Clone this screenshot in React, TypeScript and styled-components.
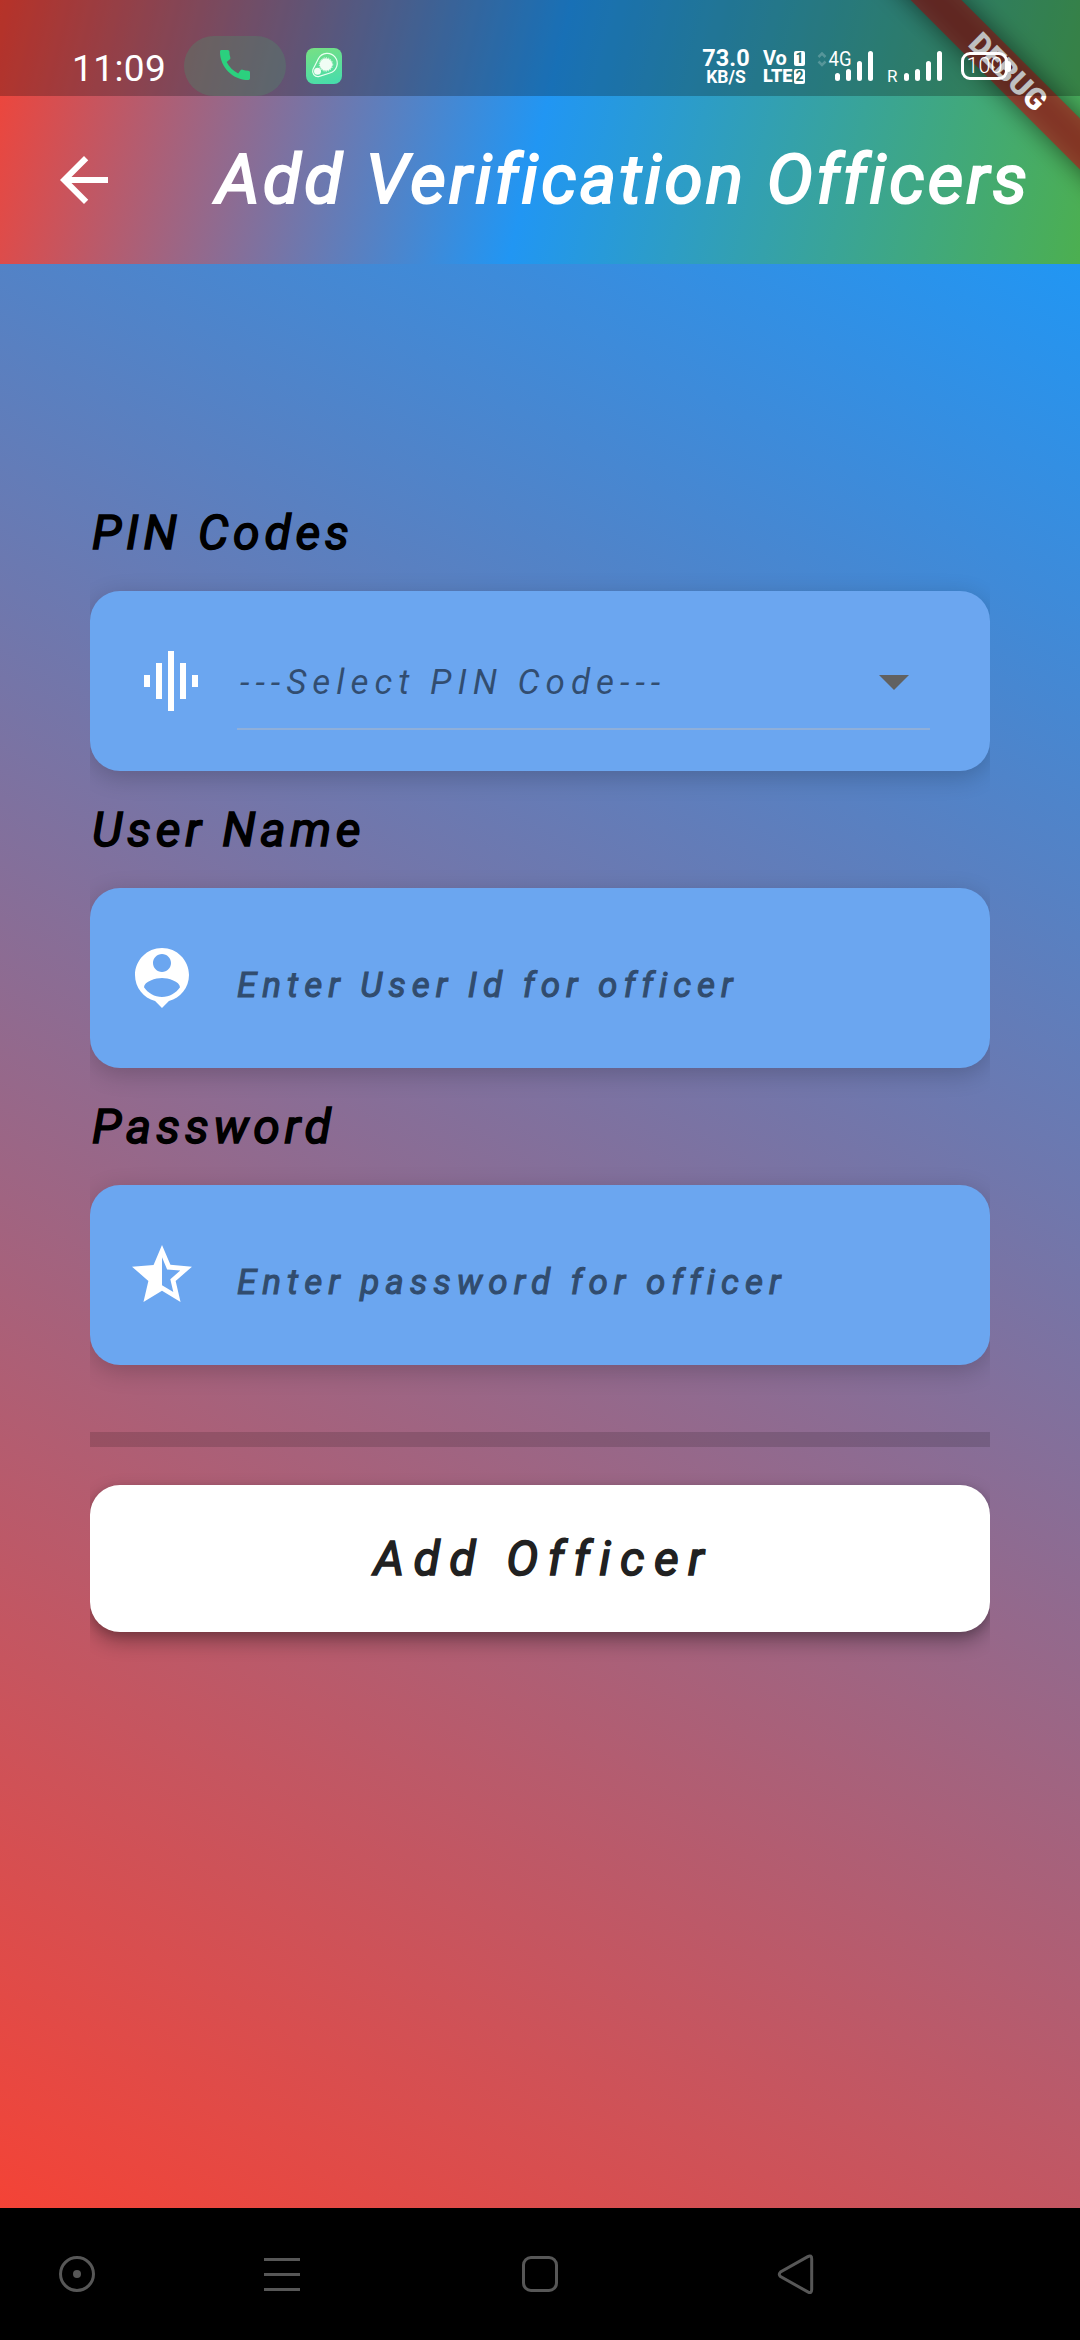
import React from "react";
import styled, { createGlobalStyle } from "styled-components";

const GlobalStyle = createGlobalStyle`
  *, *::before, *::after { box-sizing: border-box; }
  body { margin: 0; background: #000; font-family: Roboto, "Liberation Sans", sans-serif; }
`;

const Screen = styled.div`
  display: flex;
  flex-direction: column;
  width: 1080px;
  height: 2340px;
  overflow: hidden;
  font-variant-ligatures: none;
`;

/* ---------- app bar ---------- */

const AppBar = styled.header`
  position: relative;
  z-index: 1;
  flex: none;
  height: 264px;
  background: linear-gradient(103.74deg, #f44336 0%, #2196f3 50%, #4caf50 100%);
`;

const StatusBar = styled.div`
  position: relative;
  z-index: 2;
  display: flex;
  align-items: flex-start;
  height: 96px;
  padding-left: 72px;
  background: rgba(0, 0, 0, 0.25);
  color: #fff;
`;

const Clock = styled.div`
  width: 112px;
  padding-top: 48px;
  font-size: 37px;
  line-height: 42px;
  letter-spacing: 0.4px;
  white-space: nowrap;
`;

const CallPill = styled.div`
  display: flex;
  justify-content: center;
  width: 102px;
  height: 60px;
  margin-top: 36px;
  padding-top: 9px;
  border-radius: 30px;
  background: rgba(84, 128, 104, 0.42);
`;

const AppBadge = styled.div`
  width: 36px;
  height: 36px;
  margin: 48px 0 0 20px;
  border-radius: 8px;
  background: linear-gradient(165deg, #78e083, #44dcae);
`;

const StatusRight = styled.div`
  display: flex;
  align-items: flex-start;
  flex: 1;
  padding: 48px 0 0 359px;
`;

const NetSpeed = styled.div`
  display: flex;
  flex-direction: column;
  align-items: center;
  width: 50px;
  white-space: nowrap;
`;

const SpeedValue = styled.span`
  font-size: 23.5px;
  font-weight: 700;
  line-height: 20px;
`;

const SpeedUnit = styled.span`
  font-size: 17.5px;
  font-weight: 700;
  line-height: 18px;
`;

const Volte = styled.div`
  display: grid;
  grid-template-columns: 31px 11px;
  grid-template-rows: 18px 18px;
  align-items: center;
  width: 42px;
  margin: 1px 0 0 12px;
`;

const VolteText = styled.span<{ $size: number; $weight: number }>`
  font-size: ${(p) => p.$size}px;
  font-weight: ${(p) => p.$weight};
  line-height: 18px;
`;

const SimBox = styled.span`
  display: flex;
  align-items: center;
  justify-content: center;
  width: 11px;
  height: 15px;
  border-radius: 2px;
  background: #fff;
  color: #27706e;
  font-size: 14px;
  font-weight: 700;
  line-height: 15px;
`;

const Signal = styled.svg<{ $gap: number }>`
  flex: none;
  margin-left: ${(p) => p.$gap}px;
  overflow: visible;
`;

const Battery = styled.div`
  display: flex;
  align-items: center;
  margin: 4px 0 0 18px;
`;

const BatteryBody = styled.div`
  display: flex;
  align-items: center;
  justify-content: center;
  width: 47px;
  height: 28px;
  border: 3px solid #fff;
  border-radius: 9px;
  font-size: 21.5px;
  font-weight: 300;
  line-height: 22px;
`;

const BatteryTip = styled.div`
  width: 3px;
  height: 11px;
  border-radius: 0 3px 3px 0;
  background: #fff;
`;

const Toolbar = styled.div`
  display: flex;
  align-items: center;
  height: 168px;
  padding-left: 48px;
`;

const Title = styled.h1`
  margin: 0 0 0 96px;
  color: #fff;
  font-size: 69px;
  font-style: italic;
  font-weight: 400;
  letter-spacing: 3.4px;
  line-height: 84px;
  white-space: nowrap;
  -webkit-text-stroke: 2.2px #fff;
`;

const BannerClip = styled.div`
  position: absolute;
  top: 0;
  right: 0;
  z-index: 1;
  width: 264px;
  height: 264px;
  overflow: hidden;
`;

const Ribbon = styled.div`
  position: absolute;
  top: 54px;
  left: 32px;
  width: 320px;
  height: 36px;
  transform: rotate(45deg);
  color: #fff;
  font-size: 30px;
  font-weight: 900;
  line-height: 35px;
  text-align: center;

  &::before,
  &::after {
    content: "";
    position: absolute;
    inset: 0;
  }
  &::before {
    z-index: -2;
    background: rgba(0, 0, 0, 0.5);
    filter: blur(12px);
  }
  &::after {
    z-index: -1;
    background: rgba(183, 28, 28, 0.63);
  }
`;

/* ---------- form ---------- */

const Body = styled.main`
  flex: 1;
  padding: 238px 90px 0;
  background: linear-gradient(209.05deg, #2196f3, #f44336);
`;

const Form = styled.form`
  display: flex;
  flex-direction: column;
  overflow-x: clip;
`;

const Label = styled.label`
  height: 60px;
  margin-bottom: 29px;
  padding: 1px 0 0 2px;
  color: #000;
  font-size: 48px;
  font-style: italic;
  letter-spacing: 4.75px;
  line-height: 60px;
  -webkit-text-stroke: 1.6px #000;
`;

const Card = styled.div<{ $inset: number }>`
  display: flex;
  align-items: center;
  height: 180px;
  margin-bottom: 28px;
  padding: 0 60px 0 ${(p) => p.$inset}px;
  border-radius: 30px;
  background: #6ba6f0;
  box-shadow: 0 6px 24px rgba(0, 0, 0, 0.2);
`;

const Hint = styled.div`
  margin-left: 39px;
  padding-top: 16px;
  color: #314c6e;
  font-size: 35px;
  font-style: italic;
  letter-spacing: 6px;
  line-height: 42px;
  white-space: nowrap;
  -webkit-text-stroke: 1.1px #314c6e;
`;

const Select = styled.div`
  display: flex;
  align-items: center;
  justify-content: space-between;
  flex: 1;
  height: 98px;
  margin-left: 30px;
  border-bottom: 2px solid #8fafd9;
  padding-top: 2px;
`;

const SelectValue = styled.span`
  padding: 4px 0 0 3px;
  color: rgba(0, 0, 0, 0.54);
  font-size: 35px;
  font-style: italic;
  letter-spacing: 6px;
  line-height: 42px;
  white-space: nowrap;
`;

const Divider = styled.div`
  height: 15px;
  margin: 39px 0 38px;
  background: rgba(0, 0, 0, 0.14);
`;

const SubmitButton = styled.button`
  height: 147px;
  margin: 0 0 60px;
  padding: 0 0 0 7px;
  border: 0;
  border-radius: 30px;
  background: #fff;
  box-shadow: 0 9px 20px rgba(0, 0, 0, 0.33), 0 3px 9px rgba(0, 0, 0, 0.12);
  color: #212121;
  font-family: inherit;
  font-size: 48px;
  font-style: italic;
  letter-spacing: 9.5px;
  line-height: 60px;
  -webkit-text-stroke: 1.6px #212121;
`;

/* ---------- navigation bar ---------- */

const NavBar = styled.nav`
  display: flex;
  align-items: center;
  flex: none;
  height: 132px;
  padding-left: 57px;
  background: #000;
`;

const NavIcon = styled.svg<{ $gap?: number }>`
  width: 40px;
  height: 44px;
  margin-left: ${(p) => p.$gap ?? 0}px;
  fill: none;
  stroke: #575757;
  stroke-width: 3;
`;

const IconSvg = styled.svg`
  flex: none;
`;

const MaterialIcon = ({ d, color = "#fff", size = 72 }: { d: string; color?: string; size?: number }) => (
  <IconSvg width={size} height={size} viewBox="0 0 24 24" fill={color}>
    <path d={d} />
  </IconSvg>
);

const icons = {
  back: "M20 11H7.83l5.59-5.59L12 4l-8 8 8 8 1.41-1.41L7.83 13H20v-2z",
  call: "M20.01 15.38c-1.23 0-2.42-.2-3.53-.56-.35-.12-.74-.03-1.01.24l-1.57 1.97c-2.83-1.35-5.48-3.9-6.89-6.83l1.95-1.66c.27-.28.35-.67.24-1.02-.37-1.11-.56-2.3-.56-3.53 0-.54-.45-.99-.99-.99H4.19C3.65 3 3 3.24 3 3.99 3 13.28 10.73 21 20.01 21c.71 0 .99-.63.99-1.18v-3.45c0-.54-.45-.99-.99-.99z",
  equalizer: "M7 18h2V6H7v12zm4 4h2V2h-2v20zm-8-8h2v-4H3v4zm12 4h2V6h-2v12zm4-8v4h2v-4h-2z",
  person:
    "M12 2c-4.97 0-9 4.03-9 9 0 4.17 2.84 7.67 6.69 8.69L12 22l2.31-2.31C18.16 18.67 21 15.17 21 11c0-4.97-4.03-9-9-9zm0 2c1.66 0 3 1.34 3 3s-1.34 3-3 3-3-1.34-3-3 1.34-3 3-3zm0 14.3c-2.5 0-4.71-1.28-6-3.22.03-1.99 4-3.08 6-3.08 1.99 0 5.97 1.09 6 3.08-1.29 1.94-3.5 3.22-6 3.22z",
  star: "M22 9.24l-7.19-.62L12 2 9.19 8.63 2 9.24l5.46 4.73L5.82 21 12 17.27 18.18 21l-1.63-7.03L22 9.24zM12 15.4V6.1l1.71 4.04 4.38.38-3.32 2.88 1 4.28L12 15.4z",
  dropdown: "M7 10l5 5 5-5z",
};

const Bars = ({ x }: { x: number }) => (
  <g stroke="#fff" strokeWidth="5" strokeLinecap="round">
    <path d={`M${x} 27.5v3M${x + 11} 23.5v7M${x + 22} 15.5v15M${x + 33} 5.5v25`} />
  </g>
);

export default function App() {
  return (
    <Screen>
      <GlobalStyle />
      <AppBar>
        <StatusBar>
          <Clock>11:09</Clock>
          <CallPill>
            <MaterialIcon d={icons.call} color="#2bd07e" size={40} />
          </CallPill>
          <AppBadge>
            <svg width="36" height="36" viewBox="0 0 36 36" fill="none">
              <path d="M12.5 10.5A10 10 0 1 1 24 25L12.5 28.6A5.3 5.3 0 0 1 6.9 21.6Z" stroke="#e9fff0" strokeWidth="1.2" />
              <circle cx="20" cy="16.5" r="6.2" fill="#f0fdf4" />
              <circle cx="20" cy="16.5" r="6.7" stroke="#f0fdf4" strokeDasharray="1.2 1.2" />
              <circle cx="11.5" cy="23.2" r="3.5" fill="#f0fdf4" />
            </svg>
          </AppBadge>
          <StatusRight>
            <NetSpeed>
              <SpeedValue>73.0</SpeedValue>
              <SpeedUnit>KB/S</SpeedUnit>
            </NetSpeed>
            <Volte>
              <VolteText $size={20} $weight={700}>Vo</VolteText>
              <SimBox>1</SimBox>
              <VolteText $size={18} $weight={900}>LTE</VolteText>
              <SimBox>2</SimBox>
            </Volte>
            <Signal $gap={12} width="56" height="36">
              <path
                d="M1.500 9l3.500-3.500L8.500 9M1.500 13.500l3.500 3.500 3.500-3.500"
                fill="none"
                stroke="rgba(255,255,255,.22)"
                strokeWidth="2.500"
              />
              <text x="11.500" y="18" fill="#fff" fontSize="20" textLength="23" lengthAdjust="spacingAndGlyphs">4G</text>
              <Bars x={20.5} />
            </Signal>
            <Signal $gap={15} width="55" height="36">
              <text x="-1" y="34" fill="#fff" fontSize="17">R</text>
              <Bars x={18.5} />
            </Signal>
            <Battery>
              <BatteryBody>100</BatteryBody>
              <BatteryTip />
            </Battery>
          </StatusRight>
        </StatusBar>
        <Toolbar>
          <MaterialIcon d={icons.back} />
          <Title>Add Verification Officers</Title>
        </Toolbar>
        <BannerClip>
          <Ribbon>DEBUG</Ribbon>
        </BannerClip>
      </AppBar>

      <Body>
        <Form>
          <Label>PIN Codes</Label>
          <Card $inset={45}>
            <MaterialIcon d={icons.equalizer} />
            <Select>
              <SelectValue>---Select PIN Code---</SelectValue>
              <MaterialIcon d={icons.dropdown} color="#616161" />
            </Select>
          </Card>
          <Label>User Name</Label>
          <Card $inset={36}>
            <MaterialIcon d={icons.person} />
            <Hint>Enter User Id for officer</Hint>
          </Card>
          <Label>Password</Label>
          <Card $inset={36}>
            <MaterialIcon d={icons.star} />
            <Hint>Enter password for officer</Hint>
          </Card>
          <Divider />
          <SubmitButton type="button">Add Officer</SubmitButton>
        </Form>
      </Body>

      <NavBar>
        <NavIcon viewBox="0 0 40 44">
          <circle cx="20" cy="22" r="16.5" />
          <circle cx="20" cy="22" r="4" fill="#575757" stroke="none" />
        </NavIcon>
        <NavIcon $gap={165} viewBox="0 0 40 44">
          <path d="M2 7.500h36M2 22.500h36M2 37.500h36" />
        </NavIcon>
        <NavIcon $gap={218} viewBox="0 0 40 44">
          <rect x="3.5" y="5.500" width="33" height="33" rx="7.500" />
        </NavIcon>
        <NavIcon $gap={216} viewBox="0 0 40 44">
          <path d="M35.700 7V37.500Q35.700 42 31.800 39.900L4.500 24.500Q2 22.300 4.500 20L31.800 4.600Q35.700 2.500 35.700 7Z" />
        </NavIcon>
      </NavBar>
    </Screen>
  );
}
